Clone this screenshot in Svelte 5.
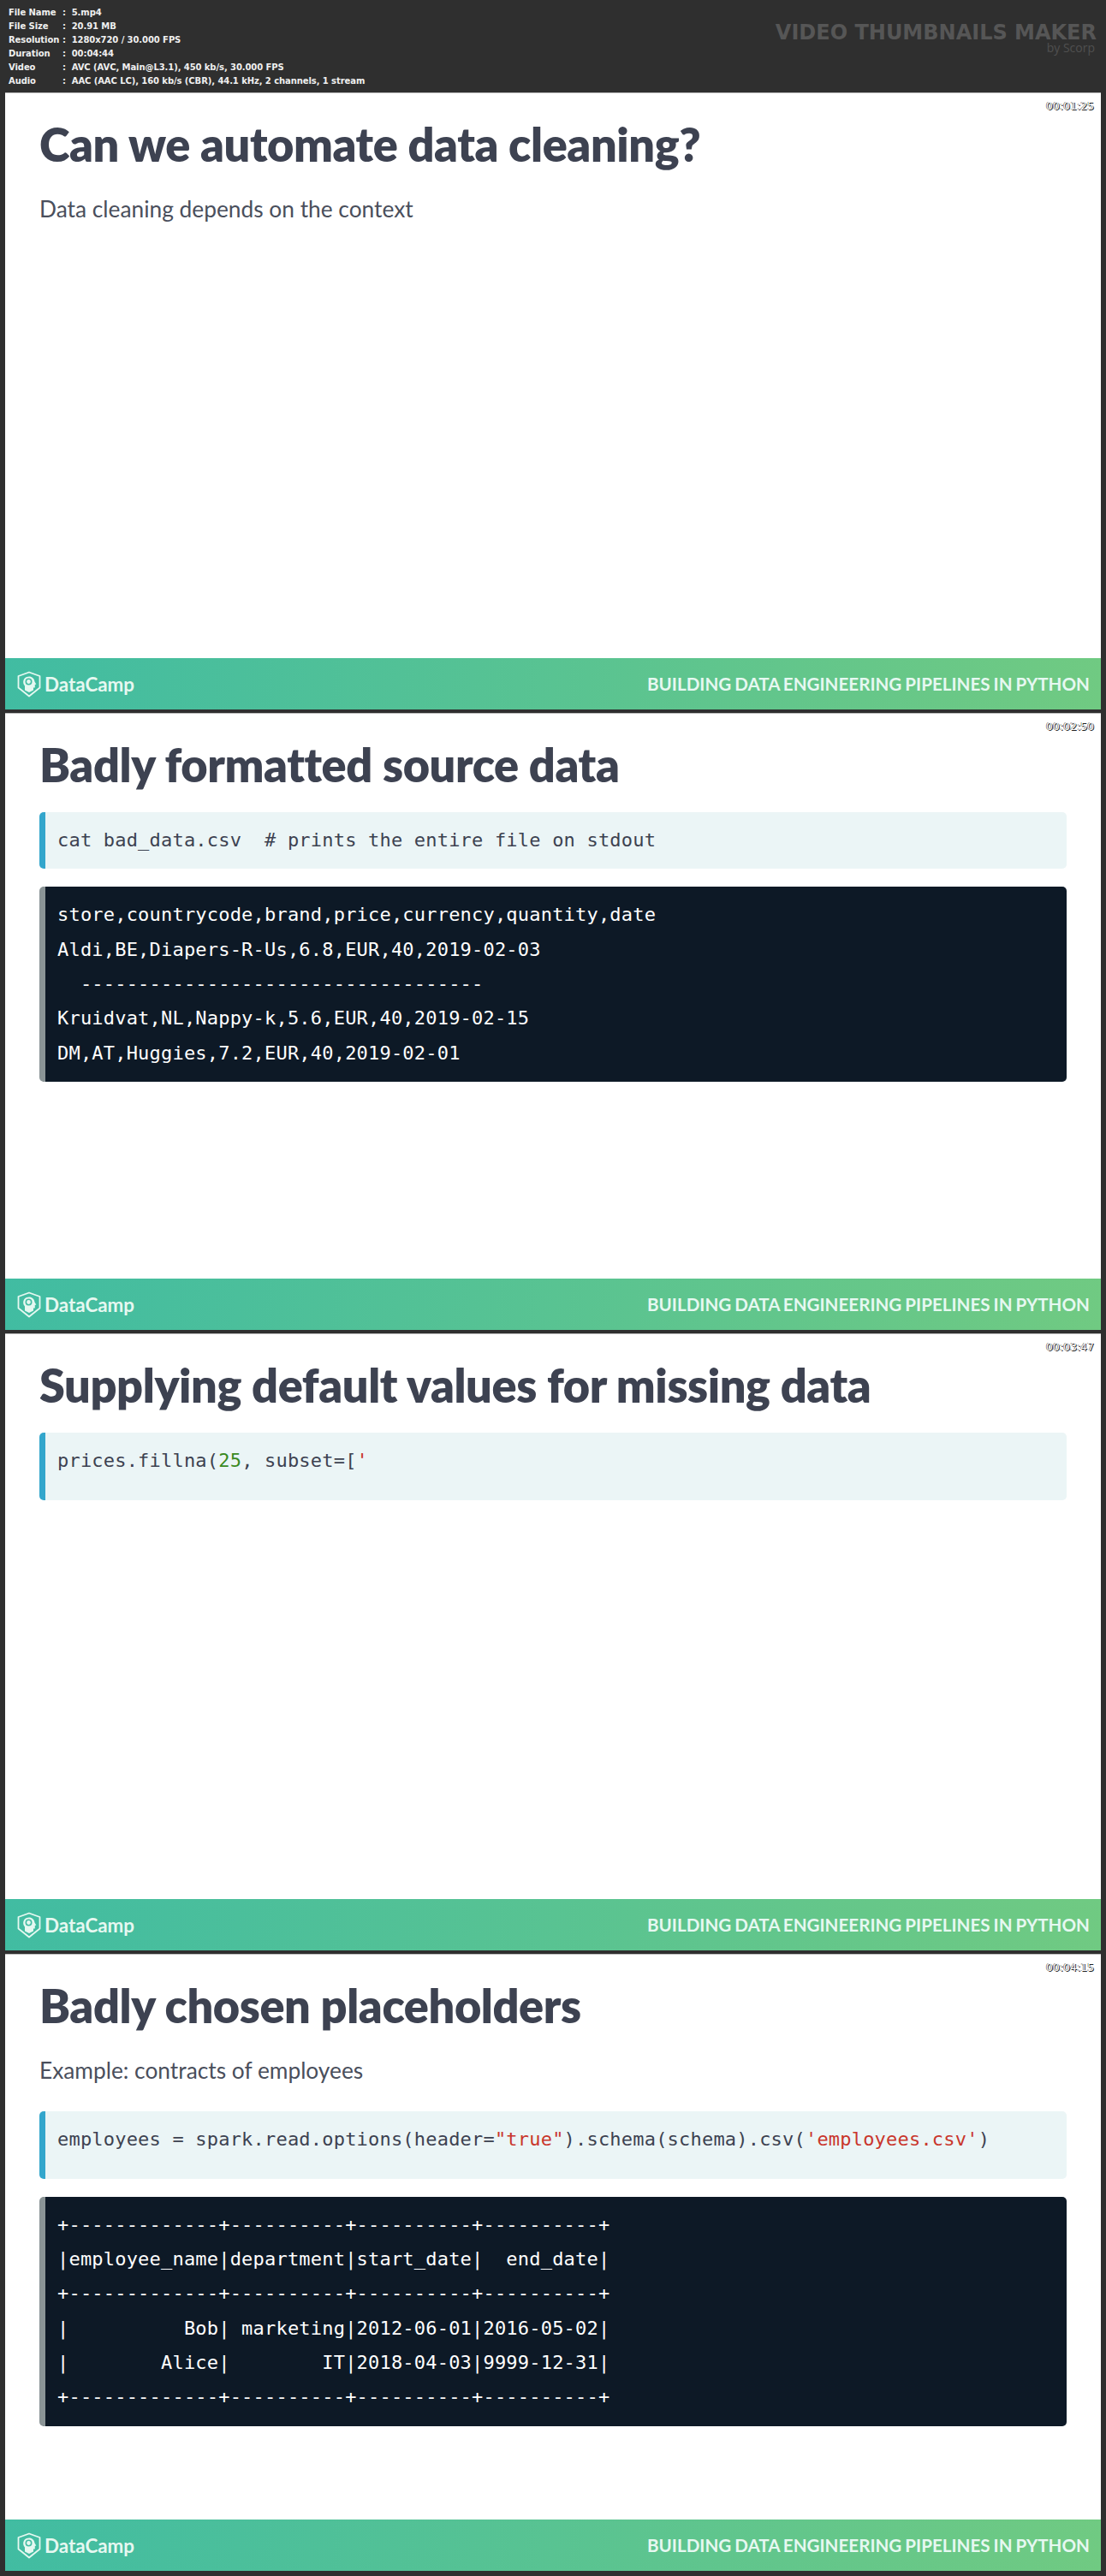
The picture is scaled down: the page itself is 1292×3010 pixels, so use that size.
<script>
	const meta = [
		['File Name', '5.mp4'],
		['File Size', '20.91 MB'],
		['Resolution', '1280x720 / 30.000 FPS'],
		['Duration', '00:04:44'],
		['Video', 'AVC (AVC, Main@L3.1), 450 kb/s, 30.000 FPS'],
		['Audio', 'AAC (AAC LC), 160 kb/s (CBR), 44.1 kHz, 2 channels, 1 stream']
	];

	const badData = [
		'store,countrycode,brand,price,currency,quantity,date',
		'Aldi,BE,Diapers-R-Us,6.8,EUR,40,2019-02-03',
		'  -----------------------------------',
		'Kruidvat,NL,Nappy-k,5.6,EUR,40,2019-02-15',
		'DM,AT,Huggies,7.2,EUR,40,2019-02-01'
	];

	const employees = [
		'+-------------+----------+----------+----------+',
		'|employee_name|department|start_date|  end_date|',
		'+-------------+----------+----------+----------+',
		'|          Bob| marketing|2012-06-01|2016-05-02|',
		'|        Alice|        IT|2018-04-03|9999-12-31|',
		'+-------------+----------+----------+----------+'
	];
</script>

{#snippet bar()}
	<div class="bar">
		<div class="brand">
			<svg width="30" height="31" viewBox="0 0 30 31" fill="none">
				<path d="M15 1.500 27.500 6v13.500L15 29.500 2.500 19.500V6Z" stroke="#e6f8f1" stroke-width="1.800" stroke-linejoin="round" />
				<path d="M15 6.500c-4 0-6.800 2.800-6.800 6.500 0 2 .8 3.400 1.800 4.500v5l5 2.500 5-2.500v-3h1.800v-3.500l1.500-.5-1.800-3c-.4-3.500-3.100-6-6.500-6Z" fill="#e6f8f1" />
				<circle cx="14.500" cy="12.500" r="3.200" fill="none" stroke="#43bda3" stroke-width="1.600" />
			</svg>
			<span>DataCamp</span>
		</div>
		<div class="course">BUILDING DATA ENGINEERING PIPELINES IN PYTHON</div>
	</div>
{/snippet}

<main>
	<header>
		<dl>
			{#each meta as [key, value]}
				<div class="row"><dt>{key}</dt><dd>: &nbsp;{value}</dd></div>
			{/each}
		</dl>
		<div class="mark">
			<strong>VIDEO THUMBNAILS MAKER</strong>
			<span>by Scorp</span>
		</div>
	</header>

	<div class="slides">
		<section class="slide">
			<time>00:01:25</time>
			<div class="content">
				<h1>Can we automate data cleaning?</h1>
				<p>Data cleaning depends on the context</p>
			</div>
			{@render bar()}
		</section>

		<section class="slide">
			<time>00:02:50</time>
			<div class="content">
				<h1>Badly formatted source data</h1>
				<pre class="code">cat bad_data.csv  # prints the entire file on stdout</pre>
				<pre class="out">{badData.join('\n')}</pre>
			</div>
			{@render bar()}
		</section>

		<section class="slide">
			<time>00:03:47</time>
			<div class="content">
				<h1>Supplying default values for missing data</h1>
				<pre class="code tall">prices.fillna(<span class="num">25</span>, subset=[<span class="str">'</span></pre>
			</div>
			{@render bar()}
		</section>

		<section class="slide">
			<time>00:04:15</time>
			<div class="content">
				<h1>Badly chosen placeholders</h1>
				<p>Example: contracts of employees</p>
				<pre class="code tall">employees = spark.read.options(header=<span class="str">"true"</span>).schema(schema).csv(<span class="str">'employees.csv'</span>)</pre>
				<pre class="out">{employees.join('\n')}</pre>
			</div>
			{@render bar()}
		</section>
	</div>
</main>

<style>
	:global(body) {
		margin: 0;
		background: #2f2f2f;
	}

	main {
		height: 3010px;
		background: #2f2f2f;
		overflow: hidden;
	}

	header {
		height: 109px;
		box-sizing: border-box;
		padding: 7px 11px 0 10px;
		display: flex;
		justify-content: space-between;
		font-family: 'DejaVu Sans', sans-serif;
		color: #f0f0f0;
	}

	dl {
		margin: 0;
		font-size: 10px;
		font-weight: 700;
		line-height: 16px;
		letter-spacing: -0.080px;
	}

	.row {
		display: flex;
	}

	dt {
		width: 63px;
	}

	dd {
		margin: 0;
	}

	.mark {
		display: flex;
		flex-direction: column;
		align-items: flex-end;
		padding-top: 21px;
	}

	.mark strong {
		font-family: 'DejaVu Sans', sans-serif;
		font-size: 24px;
		font-weight: 700;
		line-height: 20px;
		color: #565656;
	}

	.mark span {
		font-family: 'Open Sans', sans-serif;
		font-size: 14px;
		line-height: 15px;
		color: #505050;
		padding-right: 2px;
	}

	.slides {
		display: flex;
		flex-direction: column;
		gap: 5px;
		padding-left: 6px;
	}

	.slide {
		position: relative;
		width: 1280px;
		height: 720px;
		background: #fff;
		display: flex;
		flex-direction: column;
		box-shadow: 0 -1px 0 #bdbdbd;
	}

	time {
		position: absolute;
		top: 8px;
		right: 8px;
		font-family: 'DejaVu Sans', sans-serif;
		font-size: 12.500px;
		line-height: 14px;
		color: #fff;
		text-shadow:
			1px 1px 0 #222,
			-0.500px -0.500px 0 #333;
	}

	.content {
		flex: 1;
		padding: 0 40px;
	}

	h1 {
		margin: 0;
		padding-top: 26px;
		font-family: Lato, sans-serif;
		font-size: 54px;
		font-weight: 800;
		letter-spacing: -0.400px;
		line-height: 67px;
		color: #3d4251;
	}

	p {
		margin: 23px 0 0;
		font-family: Lato, sans-serif;
		font-size: 26.300px;
		line-height: 38px;
		color: #4a4f5c;
	}

	pre {
		margin: 0;
		padding: 13px 14px;
		border-left: 7px solid;
		border-radius: 5px;
		font-family: 'DejaVu Sans Mono', monospace;
		font-size: 22px;
		letter-spacing: 0.200px;
		line-height: 40.320px;
	}

	h1 + pre {
		margin-top: 22px;
	}

	p + pre {
		margin-top: 29px;
	}

	.code {
		background: #ebf5f6;
		border-color: #33a6cc;
		color: #3d4251;
	}

	.code.tall {
		padding-bottom: 25.500px;
	}

	.out {
		margin-top: 21px;
		background: #0d1926;
		border-color: #8a9496;
		color: #fff;
	}

	.num {
		color: #3a8a1f;
	}

	.str {
		color: #c9362c;
	}

	.bar {
		height: 60px;
		flex: none;
		box-sizing: border-box;
		padding: 0 13px 0 13px;
		display: flex;
		align-items: center;
		justify-content: space-between;
		background: linear-gradient(95deg, #41bca2, #70ca82);
		font-family: Lato, sans-serif;
		font-weight: 700;
		color: #e6f8f1;
	}

	.brand {
		display: flex;
		align-items: center;
		gap: 3px;
		font-size: 22.400px;
	}

	.course {
		font-size: 20.600px;
		word-spacing: -1px;
	}
</style>
